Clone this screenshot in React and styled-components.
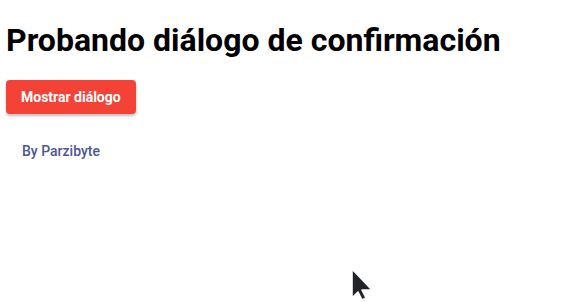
import React from 'react';
import styled, { createGlobalStyle } from 'styled-components';

const GlobalStyle = createGlobalStyle`
    html, body {
        margin: 0;
        padding: 0;
        background: #ffffff;
        font-family: Roboto, "Liberation Sans", sans-serif;
    }
`;

const Page = styled.main`
    position: relative;
    width: 564px;
    height: 302px;
    padding: 0 6px;
    box-sizing: border-box;
    overflow: hidden;
`;

const Title = styled.h1`
    margin: 0;
    padding-top: 20px;
    font-size: 32px;
    font-weight: 700;
    line-height: 40px;
    color: #000000;
`;

const Button = styled.button`
    margin-top: 20px;
    height: 34px;
    padding: 0 15px;
    border: none;
    border-radius: 4px;
    background-color: #f44336;
    color: #ffffff;
    font-family: inherit;
    font-size: 14px;
    font-weight: 700;
    box-shadow: 0 2px 3px rgba(0, 0, 0, 0.25);
    cursor: pointer;
`;

const Credit = styled.a`
    display: block;
    margin-top: 28px;
    padding-left: 16px;
    font-size: 14px;
    font-weight: 500;
    line-height: 18px;
    color: #4a5599;
    text-decoration: none;
`;

const Pointer = styled.svg`
    position: absolute;
    left: 348px;
    top: 266px;
`;

const App = () => {
    return (
        <>
            <GlobalStyle />
            <Page>
                <Title>Probando diálogo de confirmación</Title>
                <Button>Mostrar diálogo</Button>
                <Credit href="#">By Parzibyte</Credit>
                <Pointer width="30" height="36" viewBox="0 0 30 36">
                    <path
                        d="M4 3 L4 32 L10 26 L14 34 L18 32 L14 24 L24 24 Z"
                        fill="#22222c"
                        stroke="#ffffff"
                        strokeWidth="1.6"
                        strokeLinejoin="round"
                    />
                </Pointer>
            </Page>
        </>
    );
};

export default App;
